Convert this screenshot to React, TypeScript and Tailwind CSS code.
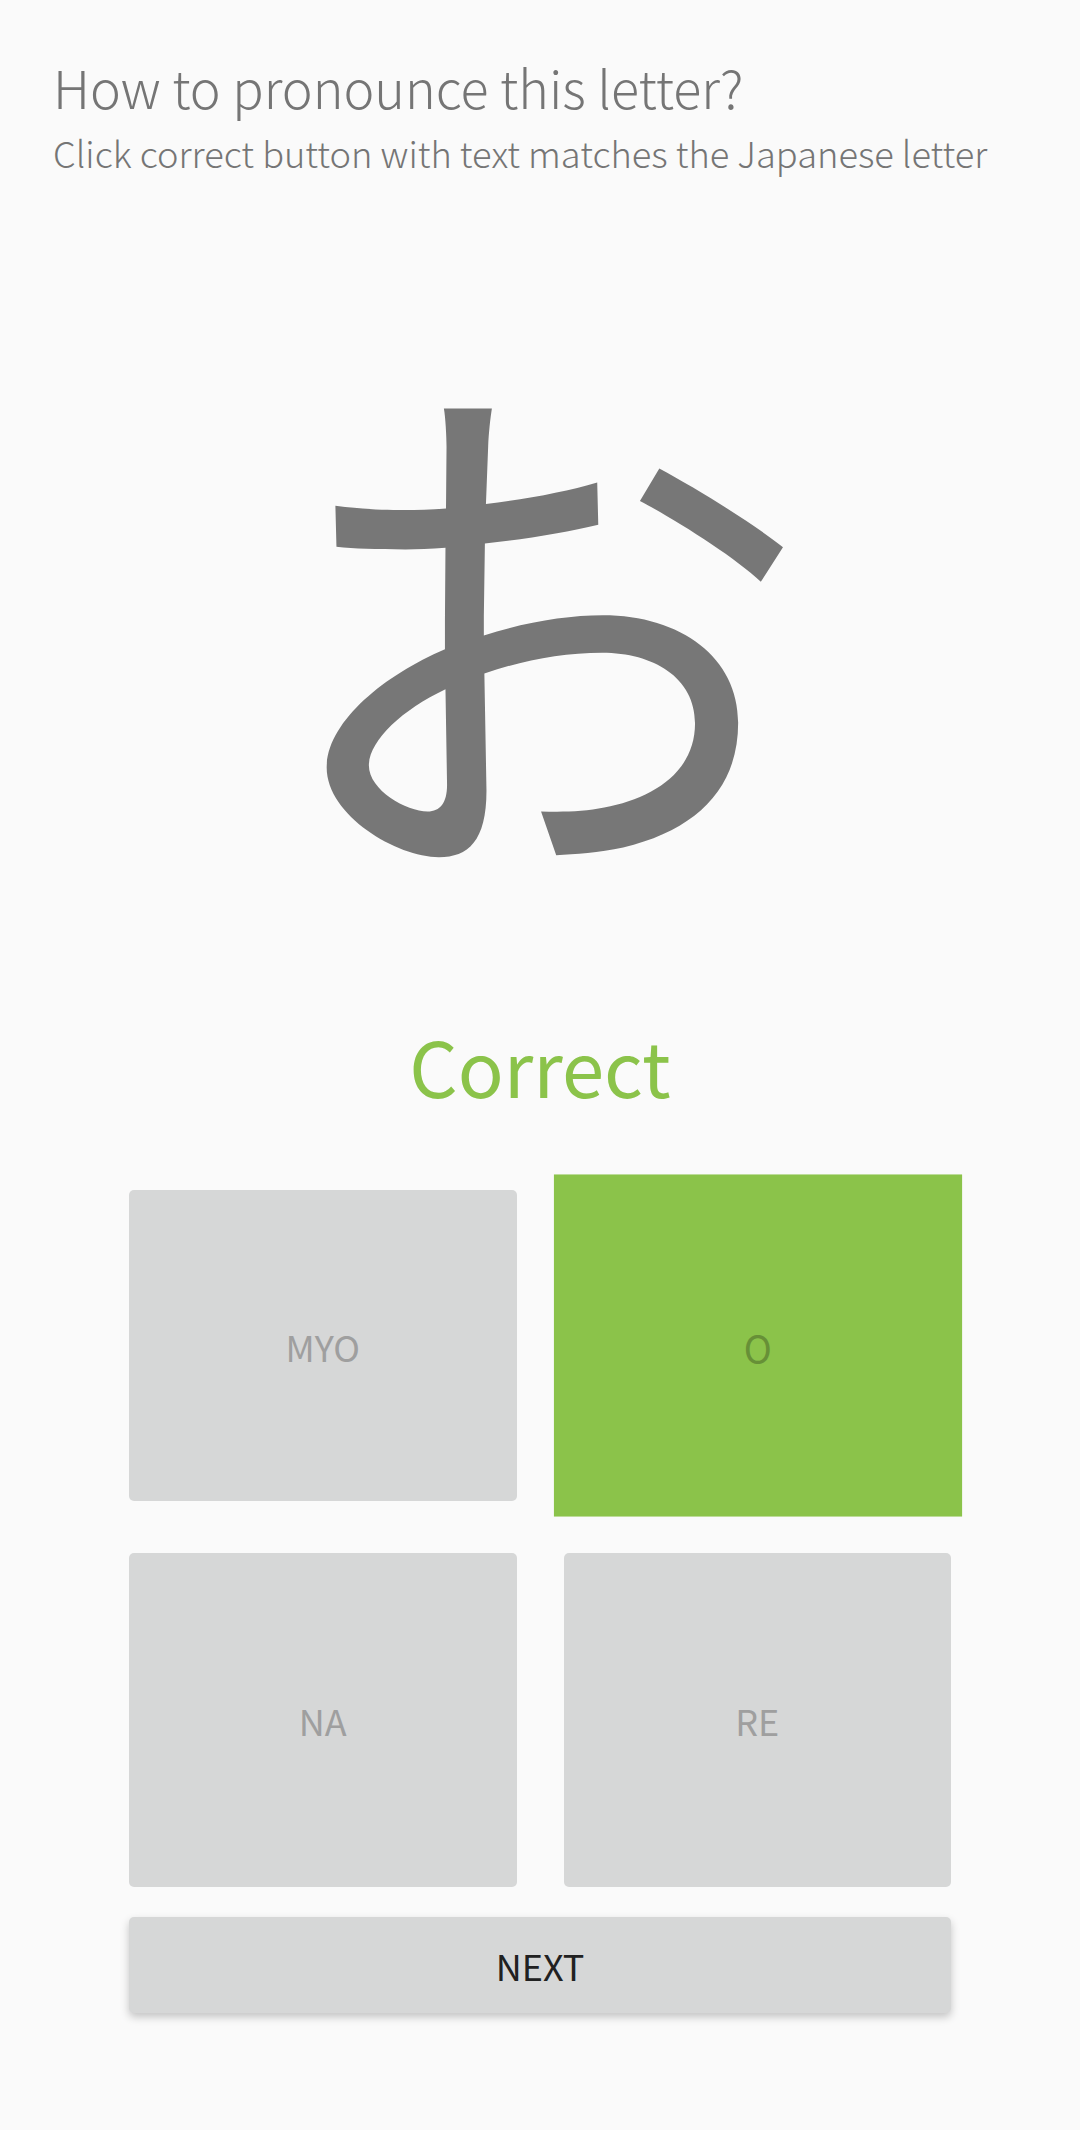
import React from "react";

const font = { fontFamily: '"Noto Sans CJK JP", "Noto Sans", sans-serif' };

type Choice = { label: string; correct?: boolean };

const rows: Choice[][] = [
  [{ label: "MYO" }, { label: "O", correct: true }],
  [{ label: "NA" }, { label: "RE" }],
];

function ChoiceButton({ label, correct }: Choice) {
  if (correct) {
    return (
      <div className="flex items-center justify-center bg-[#8bc34a] text-[36px] leading-none text-[#679037] scale-x-[1.052] scale-y-[1.1]">
        {label}
      </div>
    );
  }
  return (
    <div className="flex items-center justify-center rounded-[5px] bg-[#d6d7d7] text-[36px] leading-none text-[#9f9f9f]">
      {label}
    </div>
  );
}

export default function App() {
  return (
    <div className="min-h-[2130px] w-[1080px] bg-[#fafafa]" style={font}>
      <header className="px-[53px] pt-[61px]">
        <h1 className="text-[52px] leading-none font-light text-[#757575]">How to pronounce this letter?</h1>
        <p className="mt-[21px] text-[36.25px] leading-none font-light text-[#757575]">
          Click correct button with text matches the Japanese letter
        </p>
      </header>

      <div className="mt-[165px] flex justify-center">
        <span className="text-[540px] leading-none text-[#777777]">お</span>
      </div>

      <div className="mt-[152px] text-center text-[76px] leading-none text-[#8bc34a]">Correct</div>

      <div className="mx-auto mt-[87px] w-[822px]">
        <div className="grid h-[311px] grid-cols-2 gap-x-[47px]">
          {rows[0].map((c) => (
            <ChoiceButton key={c.label} {...c} />
          ))}
        </div>
        <div className="mt-[52px] grid h-[334px] grid-cols-2 gap-x-[47px]">
          {rows[1].map((c) => (
            <ChoiceButton key={c.label} {...c} />
          ))}
        </div>
        <button
          type="button"
          className="mt-[30px] flex h-[96px] w-full items-center justify-center rounded-[5px] bg-[#d6d7d7] text-[36px] leading-none text-[#212121] shadow-[0_4px_8px_rgba(0,0,0,0.22)]"
        >
          NEXT
        </button>
      </div>
    </div>
  );
}
